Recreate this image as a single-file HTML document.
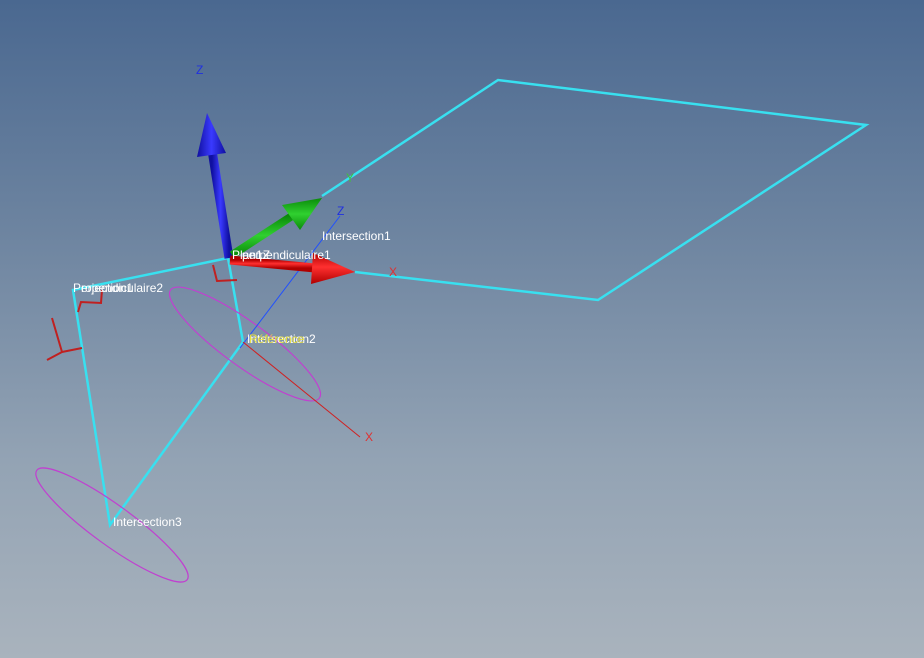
<!DOCTYPE html>
<html><head><style>
html,body{margin:0;padding:0;}
body{width:924px;height:658px;overflow:hidden;background:linear-gradient(180deg,#4a6890 0%,#6d84a0 35%,#93a3b4 70%,#a9b3bd 100%);font-family:"Liberation Sans",sans-serif;}
svg{position:absolute;left:0;top:0;}
text{font-family:"Liberation Sans",sans-serif;font-size:12px;}
</style></head><body>
<svg width="924" height="658" viewBox="0 0 924 658">
<defs>
<linearGradient id="bl" x1="0" x2="1"><stop offset="0" stop-color="#1010a0"/><stop offset=".5" stop-color="#3a3aff"/><stop offset="1" stop-color="#1010a0"/></linearGradient>
<linearGradient id="gr" x1="0" y1="1" x2="0" y2="0"><stop offset="0" stop-color="#0a8a0a"/><stop offset=".5" stop-color="#30d030"/><stop offset="1" stop-color="#0a8a0a"/></linearGradient>
<linearGradient id="rd" x1="0" y1="0" x2="0" y2="1"><stop offset="0" stop-color="#b00000"/><stop offset=".45" stop-color="#ff3030"/><stop offset="1" stop-color="#b00000"/></linearGradient>
</defs>
<g fill="none" stroke="#38e0f0" stroke-width="2.5">
<polyline points="322,196 498,80 866,125 598,300 355,272"/>
<polyline points="228,258 73,290 110,525 243,342 228,258"/>
</g>
<g fill="none" stroke="#c040d0" stroke-width="1.2">
<ellipse cx="245" cy="344" rx="92" ry="22" transform="rotate(36 245 344)"/>
<ellipse cx="112" cy="525" rx="93" ry="20" transform="rotate(36 112 525)"/>
</g>
<line x1="340" y1="216" x2="240" y2="348" stroke="#2050ff" stroke-width="1"/>
<line x1="243" y1="342" x2="360" y2="437" stroke="#d02020" stroke-width="1"/>
<g fill="none" stroke="#c02020" stroke-width="2">
<path d="M213,265 L217,281 L237,280"/>
<path d="M78,312 L81,302 L101,303 L102,290"/>
<path d="M52,318 L62,352 L47,360 M62,352 L82,348"/>
</g>
<line x1="229" y1="258" x2="212" y2="150" stroke="url(#bl)" stroke-width="9"/>
<polygon points="207,113 197,157 226,153" fill="url(#bl)"/>
<line x1="232" y1="255" x2="292" y2="216" stroke="url(#gr)" stroke-width="8"/>
<polygon points="322,198 282,205 300,230" fill="url(#gr)"/>
<line x1="230" y1="260" x2="315" y2="268" stroke="url(#rd)" stroke-width="9"/>
<polygon points="355,272 313,253 311,284" fill="url(#rd)"/>
<g>
<text x="196" y="74" fill="#2030e0">Z</text>
<text x="337" y="215" fill="#2030e0">Z</text>
<text x="346" y="182" fill="#40c040">Y</text>
<text x="389" y="276" fill="#e03030">X</text>
<text x="365" y="441" fill="#e03030">X</text>
<text x="322" y="240" fill="#fff">Intersection1</text>
<text x="232" y="259" fill="#fff">Plan1Z</text>
<text x="242" y="259" fill="#fff">perpendiculaire1</text>
<text x="73" y="292" fill="#fff">Projection1</text>
<text x="81" y="292" fill="#fff">erpendiculaire2</text>
<text x="247" y="343" fill="#fff">Intersection2</text>
<text x="249" y="343" fill="#e8e040">Référence</text>
<text x="113" y="526" fill="#fff">Intersection3</text>
</g>
</svg>
</body></html>
